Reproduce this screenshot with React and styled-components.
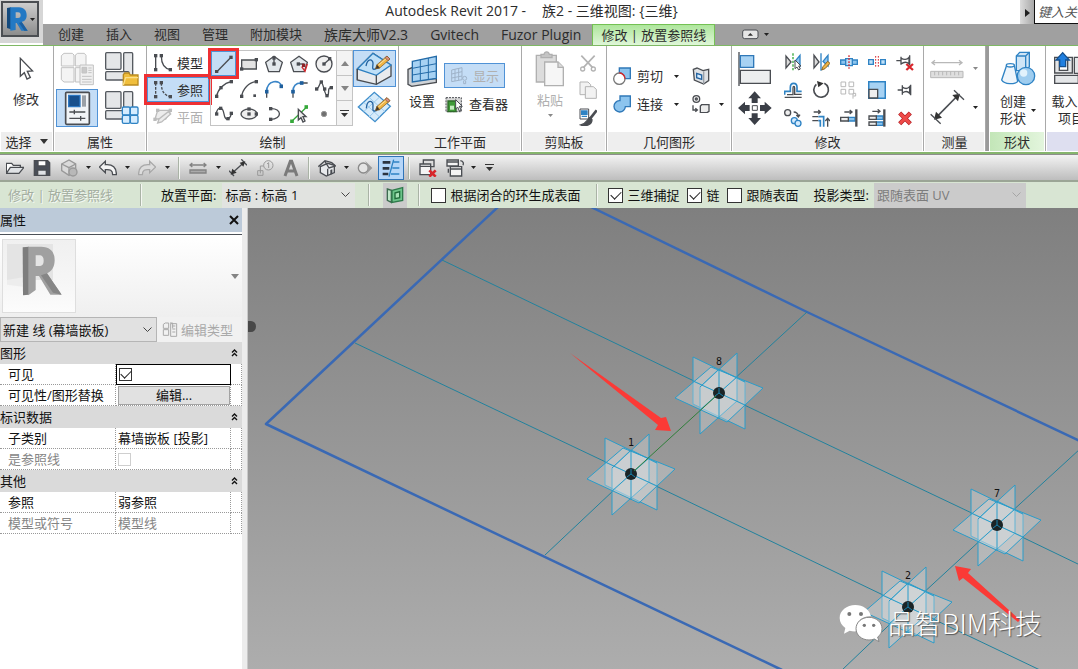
import { useState } from "react";
import styled, { createGlobalStyle } from "styled-components";

const GlobalStyle = createGlobalStyle`
  * {
    box-sizing: border-box;
  }
  body {
    margin: 0;
    background: #fff;
    color: #2c2c2c;
    font-family: "Open Sans", "Noto Sans CJK SC", sans-serif;
    font-size: 13px;
    line-height: 18px;
  }
  button, input, select {
    font: inherit;
    color: inherit;
    margin: 0;
    padding: 0;
  }
`;

const Window = styled.div`
  display: flex;
  flex-direction: column;
  min-height: 100vh;
  overflow: hidden;
`;

/* ---------- title and tabs ---------- */

const Top = styled.header`
  display: grid;
  grid-template-columns: 43px 1fr;
  grid-template-rows: 24px 21px;
`;

const AppCorner = styled.div`
  grid-row: 1 / 3;
  display: flex;
  padding: 1px 4px 6px 1px;
  border-bottom: 2px solid #fff;
  background: #d6d6d6;
`;

const AppButton = styled.button`
  flex: 1;
  display: flex;
  align-items: center;
  justify-content: center;
  gap: 2px;
  border: 2px solid #4b4e52;
  background: linear-gradient(#cdcdcd, #8d8d8d);
`;

const TitleBar = styled.div`
  display: flex;
  min-width: 0;
  background: #fff;
`;

const Title = styled.h1`
  display: flex;
  justify-content: center;
  gap: 16px;
  flex: 1;
  margin: 0;
  font-size: 14px;
  font-weight: 400;
  line-height: 22px;
  white-space: pre;
`;

const SearchToggle = styled.button`
  width: 15px;
  border: 0;
  border-right: 1px solid #111;
  background: linear-gradient(90deg, #dcdcdc, #a8a8a8);
`;

const Search = styled.input`
  width: 43px;
  border: 0;
  border-bottom: 1px solid #111;
  padding-left: 3px;
  font-style: italic;
  &::placeholder {
    color: #555;
    opacity: 1;
  }
`;

const Tabs = styled.nav`
  display: flex;
  min-width: 0;
  padding-left: 4px;
  background: #a0a0a0;
`;

const Tab = styled.button`
  border: ${(p) => (p.$active ? "1px solid #74c154" : "0")};
  border-bottom: 0;
  padding: 0 ${(p) => (p.$active ? "8px" : "11px")};
  background: ${(p) =>
    p.$active ? "linear-gradient(#aee69c, #dff6d8)" : "transparent"};
  font-size: ${(p) => (p.$latin ? "14px" : "13px")};
  line-height: 21px;
  white-space: nowrap;
`;

const TabExtra = styled.div`
  display: flex;
  align-items: center;
  gap: 5px;
  margin-left: 27px;
`;

/* ---------- ribbon ---------- */

const Ribbon = styled.div`
  display: flex;
  overflow: hidden;
  border-top: 1px solid #7fb864;
  border-bottom: 2px solid #86b56d;
  padding-bottom: 1px;
  background: #fff;
`;

const PanelBox = styled.section`
  flex: none;
  width: ${(p) => p.$w}px;
  border-right: 1px solid #a9a9a9;
  border-left: ${(p) => (p.$split ? "3px solid #9a9a9a" : "0")};
`;

const PanelBody = styled.div`
  display: flex;
  height: 86px;
  padding: 4px ${(p) => p.$pad ?? 0}px 0;
  gap: ${(p) => p.$gap ?? 0}px;
`;

const PanelTitle = styled.div`
  display: flex;
  align-items: center;
  justify-content: center;
  gap: 8px;
  height: 19px;
  margin: 0 1px;
  background: ${(p) => p.$bg || "#eeeeee"};
`;

const Column = styled.div`
  display: flex;
  flex-direction: column;
  align-items: ${(p) => p.$align || "stretch"};
  gap: ${(p) => p.$gap ?? 0}px;
  padding-top: ${(p) => p.$top ?? 0}px;
  padding-left: ${(p) => p.$left ?? 0}px;
`;

const Row = styled.div`
  display: flex;
  align-items: center;
  height: ${(p) => p.$h || 28}px;
  gap: ${(p) => p.$gap ?? 0}px;
`;

const Tool = styled.button`
  display: flex;
  flex: none;
  align-items: center;
  justify-content: center;
  gap: ${(p) => p.$gap ?? 6}px;
  width: ${(p) => (p.$w ? p.$w + "px" : "auto")};
  height: ${(p) => (p.$h ? p.$h + "px" : "auto")};
  border: 1px solid ${(p) => (p.$on ? "#4f92d6" : "transparent")};
  background: ${(p) => (p.$on ? "#c4ddf6" : "transparent")};
  color: ${(p) => (p.disabled ? "#b0b0b0" : "inherit")};
  outline: ${(p) => (p.$marked ? "3px solid #ee3033" : "none")};
  white-space: nowrap;
`;

const BigTool = styled(Tool)`
  flex-direction: column;
  justify-content: flex-start;
  line-height: 17px;
`;

const PropertyGrid = styled.div`
  display: grid;
  grid-template-columns: 42px 42px;
  grid-template-rows: 38px 38px;
  gap: 1px 3px;
`;

const Gallery = styled.div`
  display: grid;
  grid-template-columns: repeat(5, 25px);
  grid-template-rows: repeat(3, 25px);
  height: 76px;
  margin-left: 1px;
  border: 1px solid #c4c4c4;
  border-right: 0;
`;

const GalleryScroll = styled.div`
  display: flex;
  flex-direction: column;
  width: 17px;
  height: 76px;
  button {
    flex: 1;
    border: 1px solid #c4c4c4;
    margin-top: -1px;
    background: #f3f3f3;
    line-height: 0;
  }
  button:first-child {
    margin-top: 0;
  }
`;

const ModifyGrid = styled.div`
  display: grid;
  grid-template-columns: repeat(5, 28px);
  grid-template-rows: repeat(3, 28px);
  padding-left: 6px;
`;

/* ---------- quick access and options ---------- */

const QuickBar = styled.div`
  display: flex;
  align-items: center;
  height: 26px;
  padding-left: 1px;
  border-top: 1px solid #8e8e8e;
  background: linear-gradient(#f3f3f3, #bdbdbd);
`;

const QuickSlot = styled.button`
  display: flex;
  flex: none;
  align-items: center;
  justify-content: center;
  width: ${(p) => p.$w}px;
  height: 24px;
  border: ${(p) => (p.$on ? "1px solid #2f74b8" : "0")};
  background: ${(p) => (p.$on ? "#b5d6f8" : "none")};
`;

const Divider = styled.span`
  flex: none;
  width: 2px;
  height: ${(p) => p.$h || 22}px;
  margin: 0 ${(p) => p.$m ?? 0}px;
  border-left: 1px solid #aab3a6;
  border-right: 1px solid #f4f7f2;
`;

const OptionsBar = styled.div`
  display: flex;
  align-items: center;
  height: 28px;
  border-top: 2px solid #9ba596;
  padding-left: 8px;
  background: #d8e5d3;
  color: #111;
  white-space: nowrap;
`;

const Faded = styled.span`
  width: 132px;
  color: #a3ada0;
  text-shadow: 1px 1px 0 #f5f9f3;
`;

const OptionLabel = styled.label`
  margin-left: ${(p) => p.$left ?? 0}px;
  margin-right: ${(p) => p.$right ?? 0}px;
`;

const SelectWrap = styled.span`
  display: flex;
  align-items: center;
  width: ${(p) => p.$w}px;
  height: ${(p) => p.$h || 25}px;
  padding-right: 4px;
  border: 1px solid ${(p) => p.$line || "transparent"};
  background: ${(p) => p.$bg};
  color: ${(p) => (p.$dim ? "#7c7c7c" : "#111")};
  select {
    flex: 1;
    min-width: 0;
    border: 0;
    padding-left: 2px;
    background: transparent;
    appearance: none;
    opacity: 1;
  }
`;

const Check = styled.input.attrs({ type: "checkbox" })`
  display: grid;
  place-items: center;
  flex: none;
  appearance: none;
  width: ${(p) => p.$size || 15}px;
  height: ${(p) => p.$size || 15}px;
  border: 1px solid ${(p) => (p.disabled ? "#cfcfcf" : "#333")};
  background: #fff;
  &:checked::before {
    content: "";
    width: 9px;
    height: 5px;
    margin-bottom: 3px;
    border-left: 1px solid #222;
    border-bottom: 1px solid #222;
    transform: rotate(-45deg);
  }
`;

const IconSlot = styled.button`
  display: flex;
  align-items: center;
  justify-content: center;
  width: 24px;
  height: 25px;
  border: 0;
  background: #cbcbcb;
`;

/* ---------- properties palette ---------- */

const Main = styled.main`
  display: flex;
  flex: 1;
`;

const Palette = styled.aside`
  flex: none;
  width: 248px;
  padding-right: 5px;
  border-right: 1px solid #c9c9c9;
  background: linear-gradient(90deg, #fff 242px, #ececec 242px);
`;

const PaletteHead = styled.div`
  display: flex;
  align-items: center;
  justify-content: space-between;
  height: 24px;
  padding-right: 2px;
  background: #bccad9;
  color: #111;
`;

const CloseButton = styled.button`
  width: 12px;
  height: 18px;
  border: 0;
  background: none;
  line-height: 0;
`;

const TypePreview = styled.div`
  display: flex;
  align-items: center;
  justify-content: space-between;
  height: 83px;
  margin-top: 2px;
  border-top: 1px solid #4c5158;
  padding: 0 3px 0 2px;
  background: linear-gradient(#fff, #efefef);
`;

const Thumb = styled.div`
  width: 74px;
  height: 74px;
  border: 1px solid #dedede;
  background: linear-gradient(#f0f0f0, #f6f6f6 60%, #fcfcfc);
`;

const TypeRow = styled.div`
  display: flex;
  align-items: center;
  height: 25px;
  background: #f1f1f1;
`;

const EditType = styled.button`
  display: flex;
  align-items: center;
  gap: 3px;
  flex: 1;
  padding-left: 5px;
  border: 0;
  background: none;
  color: #a9a9a9;
  white-space: nowrap;
`;

const PropTable = styled.table`
  width: 242px;
  table-layout: fixed;
  border-collapse: separate;
  border-spacing: 0;
  line-height: 18px;
  color: #111;
  th, td {
    padding: 0;
    font-weight: 400;
    text-align: left;
    white-space: nowrap;
  }
`;

const GroupCell = styled.th`
  height: 22px;
  background: #dadada;
  div {
    display: flex;
    justify-content: space-between;
    align-items: center;
    padding-right: 4px;
  }
`;

const PropRow = styled.tr`
  color: ${(p) => (p.$dim ? "#858585" : "#111")};
  th, td {
    height: 21px;
    border-right: 1px dotted #999;
    border-bottom: 1px dotted #999;
  }
  th {
    padding-left: 8px;
  }
  td {
    padding-left: 2px;
  }
  td[data-active] {
    border: 1px solid #000;
    padding-left: 2px;
  }
`;

const EditButton = styled.button`
  display: block;
  width: 100%;
  height: 19px;
  border: 1px solid #a3a3a3;
  background: #e1e1e1;
  line-height: 16px;
`;

/* ---------- 3D view ---------- */

const View = styled.div`
  position: relative;
  display: flex;
  flex: 1;
  min-width: 0;
  background: linear-gradient(#7f7f7f, #adadad);
`;

const Scene = styled.svg`
  flex: 1;
  min-width: 0;
  font-family: "DejaVu Sans Mono", monospace;
  font-size: 10px;
`;

const Watermark = styled.div`
  position: absolute;
  right: 36px;
  bottom: 26px;
  display: flex;
  align-items: center;
  gap: 5px;
  color: #fff;
  font-family: "Noto Sans CJK SC", sans-serif;
  font-size: 27px;
  font-weight: 300;
  line-height: 40px;
  text-shadow: 1px 1px 1px #555;
`;

/* ---------- icons, drawn at three units to a pixel ---------- */

function Icon({ box, children }) {
  const [, , w, h] = box.split(" ").map(Number);
  return (
    <svg
      width={w / 3}
      height={h / 3}
      viewBox={box}
      fill="none"
      stroke="#4a4d52"
      strokeWidth="4"
      aria-hidden="true"
    >
      {children}
    </svg>
  );
}

const S = "-27 -27 54 54";

function Pts({ at, c = "#4a4d52", s = 10 }) {
  return at.map(([x, y]) => (
    <rect
      key={x + "," + y}
      x={x - s / 2}
      y={y - s / 2}
      width={s}
      height={s}
      fill={c}
      stroke="none"
    />
  ));
}

function Arrow({ up, gray }) {
  return (
    <svg width="8" height="5" viewBox="0 0 8 5" aria-hidden="true">
      <path
        d={up ? "M0 5 4 0 8 5Z" : "M0 0H8L4 5Z"}
        fill={gray ? "#858585" : "#333"}
      />
    </svg>
  );
}

function SmallArrow({ gray }) {
  return (
    <svg width="5" height="3" viewBox="0 0 5 3" aria-hidden="true">
      <path d="M0 0H5L2.5 3Z" fill={gray ? "#888" : "#222"} />
    </svg>
  );
}

function Chevron({ color = "#444" }) {
  return (
    <svg width="9" height="6" viewBox="0 0 9 6" fill="none" aria-hidden="true">
      <path d="M.5 .5 4.5 4.5 8.5 .5" stroke={color} />
    </svg>
  );
}

const MoreArrow = () => (
  <svg width="9" height="7" viewBox="0 0 9 7" aria-hidden="true">
    <path d="M0 0H9V1H0ZM1 3H8L4.5 7Z" fill="#333" />
  </svg>
);

const Pencil = ({ x, y }) => (
  <g transform={`translate(${x} ${y})`} stroke="#7a5520" strokeWidth="2">
    <path d="M0 34 4 22 34-4 43 5 12 32Z" fill="#f0b544" />
    <path d="M8 24 36 0" stroke="#fbe2a6" strokeWidth="3" />
    <path d="M28 1 34-4 43 5 37 10Z" fill="#d98b80" />
    <path d="M0 34 4 22 12 32Z" fill="#333" />
  </g>
);

const CursorIcon = () => (
  <Icon box="54 171 45 72">
    <path d="M58 175V229L70 218 78 237 88 232 79 214 95 213Z" fill="#fff" />
  </Icon>
);

const TypeIcon = () => (
  <Icon box="177 153 105 102">
    <g stroke="#c2c2c2" strokeWidth="3" fill="#f4f4f4">
      <path d="M181 164 189 157H214L219 162V195H181Z" />
      <path d="M223 162 230 157H250L255 163V195H223Z" />
      <path d="M181 200H219V243H189L181 236Z" />
      <path d="M223 200H240V243H223Z" />
      <path d="M237 192H277V251H237Z" fill="#f0f0f0" />
      <path d="M243 199H257V216H243Z" fill="#c9c9c9" />
      <path d="M262 201H272M262 208H272M262 215H272M243 226H272M243 235H272M243 243H272" />
    </g>
  </Icon>
);

const Shapes = () => (
  <g stroke="#555a60" fill="#e4e6e8">
    <rect x="314" y="155" width="46" height="50" rx="3" />
    <rect x="368" y="155" width="27" height="80" rx="3" />
    <rect x="314" y="212" width="70" height="25" rx="3" />
  </g>
);

const CategoryIcon = () => (
  <Icon box="309 150 108 108">
    <Shapes />
    <path d="M367 252V221L371 216H384L388 222H411V252Z" fill="#f0be3c" stroke="#b98a1f" />
    <path d="M367 252 374 230H411" stroke="#fbe08a" />
  </Icon>
);

const FamilyTypesIcon = () => (
  <Icon box="309 150 108 108">
    <Shapes />
    <g fill="#d5ecff" stroke="#2f83c4" strokeWidth="4">
      <rect x="364" y="201" width="23" height="24" rx="4" />
      <rect x="388" y="201" width="23" height="24" rx="4" />
      <rect x="364" y="226" width="23" height="24" rx="4" />
      <rect x="388" y="226" width="23" height="24" rx="4" />
    </g>
  </Icon>
);

const PropertiesIcon = () => (
  <Icon box="186 273 81 105">
    <rect x="191" y="277" width="71" height="96" rx="3" fill="#f1f4f7" strokeWidth="5" />
    <path d="M200 286H234V320H200Z" fill="#174f8c" stroke="#2e78c2" />
    <path d="M240 286H252V320H240Z" fill="#9aa0a7" stroke="none" />
    <path d="M202 336H250M202 355H250M217 329V343M236 348V362" />
  </Icon>
);

const ModelLine = ({ dashed }) => (
  <Icon box="456 153 60 60">
    <path d="M464 162V202M481 162C481 184 488 199 508 203" strokeDasharray={dashed ? "8 4" : null} />
    <Pts at={[[464, 161], [464, 203], [481, 161], [508, 203]]} />
  </Icon>
);

const PlaneIcon = () => (
  <Icon box="456 324 60 57">
    <g stroke="#bcbcbc" fill="#ececec">
      <path d="M470 334H510L494 360H462Z" />
      <path d="M470 372 474 360 502 338 509 345 482 369Z" />
    </g>
    <Pts at={[[470, 334], [508, 334], [462, 361]]} c="#bcbcbc" />
  </Icon>
);

const galleryIcons = [
  ["直线", <><path d="M-23 25 21-20" /><Pts at={[[-22, 23], [21, -20]]} /></>],
  ["矩形", <><path d="M-22-12H22V15H-22Z" fill="#e3e3e3" /><Pts at={[[22, -13], [-22, 15]]} /></>],
  ["内接多边形", <><path d="M0-23 25-5 16 23H-16L-25-5Z" fill="#e3e8ec" /><path d="M0-20V0" /><Pts at={[[0, 0], [0, -18]]} /></>],
  ["外接多边形", <><path d="M0-23 25-5 16 23H-16L-25-5Z" fill="#e3e8ec" /><path d="M-2 0H16" /><path d="M25 0 18 22 8 8" stroke="#d8262c" /><Pts at={[[-2, 0]]} /><Pts at={[[14, 4]]} c="#8a2226" /></>],
  ["圆形", <><circle r="24" fill="#f0f0f0" /><path d="M0 0 17-15" /><Pts at={[[0, 0], [17, -16]]} /></>],
  ["起点-终点-半径弧", <><path d="M-23 24C-18 0 0-18 22-22" /><Pts at={[[-22, 22], [-9, -4], [22, -22]]} /></>],
  ["圆心-端点弧", <><path d="M-22 24C-20 0 0-20 22-22" /><Pts at={[[-22, 22], [22, -22]]} /><Pts at={[[17, 20]]} s={8} /></>],
  ["相切-端点弧", <><path d="M-22 8C-22-28 20-30 22-8" stroke="#3b86c8" strokeWidth="5" /><path d="M-22 12V26" /><Pts at={[[-22, 8], [22, -8]]} c="#1f5f9c" s={11} /></>],
  ["圆角弧", <><path d="M-18 8C-18-10-8-18 6-18" stroke="#3b86c8" strokeWidth="5" /><path d="M-18 12V26M8-18H26" /><Pts at={[[-18, 8], [8, -18]]} c="#1f5f9c" s={11} /></>],
  ["样条曲线", <><path d="M-22 0C-14-2-14-20-8-20S2 22 10 20 8-6 22-4" /><Pts at={[[-22, 0], [-8, -21], [9, 20], [22, -4], [2, 0]]} /></>],
  ["样条", <><path d="M-24 2C-20-24-4-24 0 0S16 18 22 0" /><Pts at={[[-22, 0], [-10, -17], [12, 14], [22, -2]]} /></>],
  ["椭圆", <><ellipse rx="24" ry="15" fill="#eee" /><Pts at={[[0, 0], [0, -15], [22, 0]]} /></>],
  ["半椭圆", <><path d="M-10-16C24-18 26 16-10 16" /><Pts at={[[-10, -16], [-10, 16]]} /></>],
  ["拾取线", <><path d="M-24 24 24-22" stroke="#35a83a" /><Pts at={[[-21, 22], [22, -21]]} c="#35a83a" s={11} /><path d="M-2-14V18L6 11 12 24 18 21 12 8H21Z" fill="#eee" /></>],
  ["点图元", <circle r="8" fill="#707070" stroke="#999" strokeWidth="3" />],
];

const OnFaceIcon = () => (
  <Icon box="12 153 117 105">
    <path d="M19 207 66 160 120 195V228L76 253 19 240Z" fill="#e9ebee" />
    <path d="M19 207 66 160 120 195 76 226Z" fill="#bfe0f8" stroke="#2d7fc0" />
    <path d="M76 226V253M19 207V240" />
    <path d="M45 198C50 172 66 178 66 190S60 212 76 206" stroke="#2463a0" />
    <Pencil x={74} y={172} />
  </Icon>
);

const OnPlaneIcon = () => (
  <Icon box="12 273 117 102">
    <path d="M22 324 70 280 118 322 72 368Z" fill="#d6ebfa" stroke="#3f8ecb" />
    <path d="M38 310 86 354M54 295 102 338M38 338 86 294M54 354 102 308" stroke="#9ccbee" strokeWidth="3" />
    <path d="M46 328C48 300 66 304 66 318S62 340 78 334" stroke="#2463a0" />
    <Pencil x={74} y={300} />
  </Icon>
);

const SetPlaneIcon = () => (
  <Icon box="165 159 99 102">
    <path d="M171 205 185 199V240L256 232V244L182 256 171 250Z" fill="#cfd3d7" />
    <path d="M184 181 256 166V232L184 243Z" fill="#a7d2f3" stroke="#246ba8" />
    <path d="M208 176V240M232 171V236M184 202 256 188M184 222 256 210" stroke="#246ba8" strokeWidth="3" />
  </Icon>
);

const ShowIcon = () => (
  <Icon box="294 201 54 57">
    <g stroke="#9fb3c9" strokeWidth="3">
      <path d="M299 213 330 206V242L299 248ZM309 211V246M320 208V244M299 225 330 218M299 237 330 231" />
      <circle cx="338" cy="238" r="6" />
      <path d="M335 246V254H341V246" />
    </g>
  </Icon>
);

const ViewerIcon = () => (
  <Icon box="294 285 54 51">
    <path d="M297 290H343V332H297Z" fill="#d7d7d7" strokeWidth="3" strokeDasharray="6 3" />
    <path d="M303 300H327V332H303Z" fill="#3f9a38" stroke="#2f6a2b" />
    <path d="M309 314H321V326H309Z" fill="#c4ebc0" stroke="none" />
    <path d="M326 296V324L332 318 337 330 342 327 337 316H346Z" fill="#fff" strokeWidth="3" />
  </Icon>
);

const PasteIcon = () => (
  <Icon box="555 150 90 108">
    <g stroke="#b0b0b0" fill="#dcdcdc">
      <path d="M559 163H619V243H559Z" />
      <path d="M573 170V160H582C584 150 596 150 598 160H606V170Z" fill="#c4c4c4" />
      <path d="M584 183H624L640 199V254H584Z" fill="#f6f6f6" />
      <path d="M624 183V199H640" />
    </g>
  </Icon>
);

const CutIcon = () => (
  <Icon box={S}>
    <g stroke="#b3b3b3">
      <path d="M-20-22 14 14M20-22-14 14" strokeWidth="5" />
      <circle cx="-16" cy="18" r="6" />
      <circle cx="16" cy="18" r="6" />
    </g>
  </Icon>
);

const CopyIcon = () => (
  <Icon box={S}>
    <g stroke="#b3b3b3" strokeWidth="3" fill="#f2f2f2">
      <path d="M-24-24H0L8-16V14H-24Z" />
      <path d="M-8-10H16L25-2V25H-8Z" />
    </g>
  </Icon>
);

const MatchIcon = () => (
  <Icon box={S}>
    <path d="M-24-24H2V6H-24Z" fill="#fff" strokeWidth="3" />
    <path d="M-19-18H-3V-8H-19ZM-19-2H-3" fill="#2f83c4" stroke="#2f83c4" />
    <path d="M26-20 4 8" strokeWidth="8" />
    <path d="M6 2C-2 6-4 20-22 24-6 30 12 22 12 8Z" fill="#4a4d52" />
  </Icon>
);

const CutGeomIcon = () => (
  <Icon box={S}>
    <path d="M-8-24H25V8H6A18 18 0 0 0-8-10Z" fill="#8cc4ee" stroke="#2f78b8" />
    <circle cx="-8" cy="8" r="17" fill="#fff" stroke="#777" />
    <path d="M-8-9A17 17 0 0 1 9 8" stroke="#d8262c" />
  </Icon>
);

const JoinIcon = () => (
  <Icon box={S}>
    <path d="M-6-24H25V8H10A17 17 0 1 1-8-10H-6Z" fill="#8cc4ee" stroke="#2f78b8" />
  </Icon>
);

const SplitFaceIcon = () => (
  <Icon box={S}>
    <path d="M-23-20-12-24 6-16 23-20V14L8 24-20 12Z" fill="#dfe2e5" />
    <path d="M8-14V24" stroke="#9aa0a7" />
    <path d="M-13-8 2-3V10L-13 5Z" fill="#d5ecff" stroke="#2463a0" />
  </Icon>
);

const CopyGeomIcon = () => (
  <Icon box="-30 -27 60 54">
    <circle cx="-14" cy="-15" r="10" fill="#f2f2f2" />
    <circle cx="-14" cy="-15" r="3" />
    <path d="M2 2H24V22L18 26H-2V6Z" fill="#ececec" />
    <path d="M-24 4V18H-12M-17 13-11 18-17 23" />
  </Icon>
);

const AlignIcon = () => (
  <Icon box="51 153 105 108">
    <path d="M57 156V258" />
    <path d="M61 167H101V202H61Z" fill="#a7d2f3" stroke="#2f78b8" />
    <path d="M61 211H151V250H61Z" fill="#eceeef" />
  </Icon>
);

const MoveIcon = () => (
  <Icon box="51 273 105 102">
    <path
      d="M104 274 123 295H113V309H95V295H85ZM104 375 123 354H113V340H95V354H85ZM54 324 75 305V315H89V333H75V343ZM155 324 134 305V315H120V333H134V343Z"
      fill="#3a3e46"
      stroke="none"
    />
    <path d="M97 317H112V331H97Z" fill="#fff" strokeWidth="3" />
  </Icon>
);

const Red = "#d8262c";
const Blue = "#2f83c4";

const modifyIcons = [
  ["镜像-拾取轴", <><path d="M-21-18V18L-6 0Z" fill="#ddd" /><path d="M0-26V26" stroke="#35a83a" strokeDasharray="7 4" /><path d="M21-20V12L6-2Z" fill="#8cc4ee" stroke={Blue} /><path d="M6-6V20L12 15 17 24 22 21 17 12H24Z" fill="#fff" strokeWidth="3" /></>],
  ["镜像-绘制轴", <><path d="M-21-20V18L-6 0Z" fill="#ddd" /><path d="M0-26V26" stroke={Blue} /><path d="M21-20V12L6-2Z" fill="#8cc4ee" stroke={Blue} /><path d="M2 24 6 14 20-2 27 4 12 20Z" fill="#f0b544" stroke="#8a6424" strokeWidth="3" /></>],
  ["拆分图元", <><path d="M-25-6H25V7H-25Z" fill="#8cc4ee" stroke={Blue} /><path d="M-10-10H10V11H-10Z" fill="#bfe0f8" stroke={Blue} /><path d="M0-20V20" stroke={Red} strokeDasharray="5 4" /></>],
  ["用间隙拆分", <><path d="M-25-7H-11V7H-25ZM11-7H25V7H11Z" fill="#bfe0f8" stroke={Blue} /><path d="M-4-18V18M4-18V18" stroke={Red} strokeWidth="3" strokeDasharray="5 4" /></>],
  ["解锁", <><path d="M-26-4H-12M-12-16V8M-12-12C-4-6 6-6 12-14V6C6 0-4 0-12 6M14-20V10" /><path d="M4 6 24 24M24 6 4 24" stroke={Red} strokeWidth="7" /></>],
  ["偏移", <><path d="M-25 14V4H-8V-8C-8-24 12-24 12-8V4H26" stroke={Blue} strokeWidth="5" /><path d="M-25 22H26M-18 14H0V-6C0-12 5-12 5-6V13H26" /></>],
  ["旋转", <><path d="M-14-17A22 22 0 1 0 10-20" strokeWidth="5" /><path d="M-12-27 8-20-8-8Z" fill="#333" stroke="none" /></>],
  ["阵列", <g stroke="#b9b9b9" strokeWidth="3"><path d="M-24-24H-10V-10H-24ZM0-24H14V-10H0ZM-24-2H-10V12H-24ZM0-2H14V12H0Z" /><path d="M12 26V10H20V18H13" /></g>],
  ["缩放", <><path d="M-25-25H25V25H-25Z" fill="#a7d2f3" stroke={Blue} strokeWidth="5" /><path d="M-24-2H2V24H-24Z" fill="#eee" /></>],
  ["锁定", <path d="M-22 0H-8M-8-14V14M-8-9C0-3 8-3 14-10V10C8 3 0 3-8 9M17-16V16" />],
  ["复制", <><circle cx="-16" cy="-16" r="9" fill="#eee" /><path d="M2-18C10-18 16-12 16-6M10-9 16-3 21-10" /><circle cx="4" cy="8" r="9" fill="#d5ecff" stroke={Blue} /><circle cx="15" cy="16" r="9" fill="#d5ecff" stroke={Blue} /></>],
  ["修剪为角", <><path d="M-22-18H-2M-8-24-2-18-8-12" /><path d="M-26-4H-8M-26 8H-8" /><path d="M-8-4H8V26M-8 8H-2V26" stroke={Blue} strokeWidth="5" /><path d="M20 26V2M13 9 20 1 27 9" /></>],
  ["修剪单个", <><path d="M-14-18H8M2-24 9-18 2-12" /><path d="M-2-2H18V9H-2Z" fill="#8cc4ee" stroke={Blue} /><path d="M-25-2H-2V9H-25Z" fill="#eee" /><path d="M22-26V26" strokeWidth="7" /></>],
  ["修剪多个", <><path d="M-14-20H8M2-26 9-20 2-14" /><path d="M-2-6H18V4H-2ZM-2 12H18V22H-2Z" fill="#8cc4ee" stroke={Blue} /><path d="M-24-6H-2V4H-24ZM-24 12H-2V22H-24Z" fill="#eee" /><path d="M22-26V26" strokeWidth="7" /></>],
  ["删除", <><path d="M-16-15 16 17M16-15-16 17" stroke="#b01d22" strokeWidth="13" /><path d="M-15-14 15 16M15-14-15 16" stroke="#ee4a48" strokeWidth="9" /></>],
];

const RulerIcon = () => (
  <Icon box="630 171 102 66">
    <g stroke="#b8b8b8">
      <path d="M636 188H726M645 181 636 188 645 195M717 181 726 188 717 195" />
      <path d="M632 214H729V233H632Z" fill="#dedede" strokeWidth="3" />
      <path d="M644 214V226M656 214V226M668 214V226M680 214V226M692 214V226M704 214V226M716 214V226" strokeWidth="3" />
    </g>
  </Icon>
);

const DimensionIcon = () => (
  <Icon box="630 270 105 108">
    <path d="M648 356 712 291" strokeWidth="5" />
    <path d="M642 362 648 338 666 356ZM720 284 697 288 714 307Z" fill="#333" stroke="none" />
    <path d="M632 346 662 374M702 274 732 302" />
  </Icon>
);

const FormIcon = () => (
  <Icon box="837 153 108 108">
    <path d="M886 168 896 157H925V200L914 212H886Z" fill="#cfe5f6" stroke={Blue} />
    <path d="M886 168H914V212M914 168 925 157" stroke={Blue} />
    <path d="M857 196 842 240C850 254 882 254 890 244L880 196Z" fill="#eef5fb" stroke={Blue} />
    <ellipse cx="868" cy="196" rx="12" ry="5" fill="#fff" stroke={Blue} />
    <circle cx="915" cy="228" r="26" fill="#9fcdef" stroke={Blue} />
    <circle cx="908" cy="219" r="11" fill="#e2f2fc" stroke="none" />
  </Icon>
);

const LoadIcon = () => (
  <Icon box="1008 153 111 108">
    <path d="M1013 172H1027V211H1052V172H1066V219H1013Z" fill="#e4e6e8" />
    <path d="M1013 226H1084V250H1013ZM1072 172H1098V250H1084V220H1072Z" fill="#e4e6e8" />
    <path d="M1037 158 1057 180H1046V200H1028V180H1017Z" fill="#1f7fe0" stroke="#14508f" />
  </Icon>
);

const quickIcons = {
  open: <Icon box={S}><path d="M-26 16V-14H-10L-5-8H16V0" fill="#fff" /><path d="M-26 16-14-2H27L12 16Z" fill="#dfe2e5" /></Icon>,
  save: <Icon box={S}><path d="M-23-22H17L23-16V22H-23Z" fill="#4a4f58" /><path d="M-12-22H12V-6H-12Z" fill="#fff" /><path d="M-13 6H13V22H-13Z" fill="#dfe2e5" /></Icon>,
  sync: <Icon box={S}><g stroke="#999"><path d="M-22-12 0-24 20-12V8L0 22-22 8Z" fill="#dadada" /><path d="M-22-12 0-1 20-12M0-1V22" /><circle cx="12" cy="12" r="12" fill="#b8b8b8" /></g></Icon>,
  undo: <Icon box={S}><path d="M-26-3-8-20V-10C14-12 26-2 25 20H14C14 6 6 4-8 5V14Z" fill="#f4f4f4" /></Icon>,
  redo: <Icon box={S}><path d="M26-3 8-20V-10C-14-12-26-2-25 20H-14C-14 6-6 4 8 5V14Z" fill="#dcdcdc" stroke="#a8a8a8" /></Icon>,
  measure: <Icon box={S}><path d="M-24-9H24M-17-15-24-9-17-3M17-15 24-9 17-3" stroke="#838383" /><path d="M-24 6H24V15H-24Z" stroke="#838383" fill="#aaa" /></Icon>,
  dim: <Icon box={S}><path d="M-17 15 16-15M-27 8-12 24M10-26 27-8" /><path d="M-22 20-17 2-4 14ZM22-20 5-16 16-4Z" fill="#333" stroke="none" /></Icon>,
  tag: <Icon box={S}><g stroke="#999" strokeWidth="3"><circle cx="10" cy="-8" r="14" /><path d="M6-12 11-16V0M-4-6H-14V16M-22 8H-6V22H-22Z" /></g></Icon>,
  text: <Icon box={S}><path d="M-18 24-2-20H2L18 24M-11 9H11" stroke="#7a7a7a" strokeWidth="9" /></Icon>,
  home: <Icon box={S}><path d="M-20-4V14L-2 24 22 14V-8L2-14Z" fill="#e8eaec" /><path d="M-26-4-6-22 14-16 26-6 6 0-6-20M2 2V22" /><path d="M10 6 16 4V18L10 20Z" fill="#4a4d52" stroke="none" /></Icon>,
  section: <Icon box={S}><circle cx="-5" r="15" stroke="#8a8a8a" fill="#e4e4e4" /><path d="M0-22 22 0 0 22 8 8V-8Z" fill="#999" stroke="none" /></Icon>,
  thin: <Icon box={S}><path d="M-25-17H-2M-25 1H-5M-25 18H-8" strokeWidth="8" stroke="#2c3440" /><path d="M8-18H25M4 0H25M0 18H25M8-25-6 26" stroke="#2f83c4" /></Icon>,
  close: <Icon box={S}><path d="M-14-24H18V-4H-14Z" fill="#ddd" /><path d="M-24-12H8V20H-24ZM-24-5H8" fill="#f4f4f4" /><path d="M4 7 23 26M23 7 4 26" stroke={Red} strokeWidth="8" /></Icon>,
  switch: <Icon box={S}><path d="M-24-24H10V-6H-24ZM-24-18H10" fill="#f4f4f4" /><path d="M-14-4H20V24H-14ZM-14 3H20" fill="#f4f4f4" /><path d="M16-22C26-20 26-14 24-8M-20 2V14" /></Icon>,
};

const quickItems = [
  ["open", 27], ["save", 27], ["sync", 27, 12], ["undo", 27, 12], ["redo", 27, 14],
  ["|"], ["measure", 28, 12], ["dim", 28], ["tag", 26], ["text", 26],
  ["|"], ["home", 26, 12], ["section", 26], ["thin", 26], ["|"],
  ["close", 27], ["switch", 28, 8],
];

const PlaneButtonIcon = () => (
  <Icon box={S}>
    <path d="M-23-18-11-14V22L-23 16Z" fill="#bfe5c8" stroke="#3d6b50" />
    <path d="M-9-14 23-22V16L-9 22Z" fill="#6cc48a" stroke="#2f7a4c" />
    <path d="M0-6 14-10V8L0 11Z" stroke="#1f6b3a" fill="#a5e0b5" />
  </Icon>
);

const AppLogo = () => (
  <Icon box="0 0 69 78">
    <g stroke="none">
      <path d="M6 6 18 4V70L6 66Z" fill="#154a7d" />
      <path
        d="M16 4H42C58 4 65 15 65 28S58 46 50 48L68 74H49L35 51H32V72L16 74ZM32 19V36H39C45 36 47 33 47 28S45 19 39 19Z"
        fill="#2379c4"
        fillRule="evenodd"
      />
      <path d="M50 48 68 74H58L42 51Z" fill="#1c5f9f" />
    </g>
  </Icon>
);

const TypeLogo = () => (
  <Icon box="0 0 216 216">
    <g stroke="none">
      <path d="M12 12H150V120H12Z" fill="#e4e4e4" />
      <path d="M12 120 60 112V140L12 134Z" fill="#ededed" />
      <path d="M59 22 78 20V164L60 166Z" fill="#7d7d7d" />
      <path
        d="M76 20H114C144 20 155 38 155 60 155 82 145 94 132 100L176 164H142L108 108H98V150L76 166ZM98 46V78H108C118 78 122 72 122 62S118 46 108 46Z"
        fill="#a0a0a0"
        fillRule="evenodd"
      />
      <path d="M132 100 176 164 150 158 114 106Z" fill="#868686" />
    </g>
  </Icon>
);

const WeChat = () => (
  <Icon box="834 816 132 114">
    <g stroke="none">
      <path
        d="M883 819C857 819 836 836 836 858 836 871 843 881 853 888L849 905 866 896C873 898 880 899 886 898 880 872 902 851 930 853 926 833 906 819 883 819Z"
        fill="#fff"
      />
      <path
        d="M924 856C902 856 885 871 885 890S902 924 924 924C930 924 935 923 940 921L954 929 950 915C959 909 963 900 963 890 963 871 946 856 924 856Z"
        fill="#fff"
        stroke="#888"
        strokeWidth="3"
      />
      <circle cx="865" cy="846" r="6" fill="#777" />
      <circle cx="900" cy="846" r="6" fill="#777" />
      <circle cx="910" cy="880" r="5" fill="#777" />
      <circle cx="938" cy="880" r="5" fill="#777" />
    </g>
  </Icon>
);

/* ---------- pieces ---------- */

function Panel({ w, title, children, pad, gap, bg, split }) {
  return (
    <PanelBox $w={w} $split={split}>
      <PanelBody $pad={pad} $gap={gap}>
        {children}
      </PanelBody>
      <PanelTitle $bg={bg}>{title}</PanelTitle>
    </PanelBox>
  );
}

function RibbonPanels() {
  const [tool, setTool] = useState("直线");
  return (
    <Ribbon>
      <Panel w={54} title={<>选择 <Arrow /></>}>
        <BigTool $w={52} $gap={10}>
          <Column $top={6}><CursorIcon /></Column>
          修改
        </BigTool>
      </Panel>
      <Panel w={93} title="属性" pad={2}>
        <PropertyGrid>
          <Tool aria-label="类型属性" disabled><TypeIcon /></Tool>
          <Tool aria-label="族类别"><CategoryIcon /></Tool>
          <Tool aria-label="属性" $on><PropertiesIcon /></Tool>
          <Tool aria-label="族类型"><FamilyTypesIcon /></Tool>
        </PropertyGrid>
      </Panel>
      <Panel w={252} title="绘制">
        <Column $gap={2}>
          <Tool $w={62} $h={25} $gap={4}><ModelLine />模型</Tool>
          <Tool $w={62} $h={25} $gap={4} $on $marked><ModelLine dashed />参照</Tool>
          <Tool $w={62} $h={25} $gap={4} disabled><PlaneIcon />平面</Tool>
        </Column>
        <Gallery>
          {galleryIcons.map(([name, art]) => (
            <Tool
              key={name}
              aria-label={name}
              $on={tool === name}
              $marked={name === "直线"}
              onClick={() => setTool(name)}
            >
              <Icon box={S}>{art}</Icon>
            </Tool>
          ))}
        </Gallery>
        <GalleryScroll>
          <button aria-label="上"><Arrow up gray /></button>
          <button aria-label="下"><Arrow gray /></button>
          <button aria-label="更多"><MoreArrow /></button>
        </GalleryScroll>
        <Column>
          <Tool $w={43} $h={37} aria-label="在面上绘制" $on><OnFaceIcon /></Tool>
          <Tool $w={43} $h={40} aria-label="在工作平面上绘制"><OnPlaneIcon /></Tool>
        </Column>
      </Panel>
      <Panel w={123} title="工作平面" pad={5}>
        <BigTool $w={36} $gap={5}><Column $top={3}><SetPlaneIcon /></Column>设置</BigTool>
        <Column $top={13} $left={4} $gap={4} $align="flex-start">
          <Tool $w={61} $h={25} $gap={5} $on disabled><ShowIcon />显示</Tool>
          <Tool $h={24} $gap={6}><ViewerIcon />查看器</Tool>
        </Column>
      </Panel>
      <Panel w={85} title="剪贴板" pad={7}>
        <BigTool $w={42} $gap={5} disabled><PasteIcon />粘贴<SmallArrow gray /></BigTool>
        <Column>
          <Tool $w={34} $h={26} aria-label="剪切" disabled><CutIcon /></Tool>
          <Tool $w={34} $h={28} aria-label="复制" disabled><CopyIcon /></Tool>
          <Tool $w={34} $h={26} aria-label="匹配类型"><MatchIcon /></Tool>
        </Column>
      </Panel>
      <Panel w={125} title="几何图形" pad={5}>
        <Column $top={12}>
          <Row>
            <Tool $gap={6}><CutGeomIcon />剪切</Tool>
            <Tool $w={24}><SmallArrow /></Tool>
            <Tool $w={26} aria-label="拆分面"><SplitFaceIcon /></Tool>
          </Row>
          <Row>
            <Tool $gap={6}><JoinIcon />连接</Tool>
            <Tool $w={24}><SmallArrow /></Tool>
            <Tool $w={26} aria-label="填色"><CopyGeomIcon /></Tool>
            <Tool $w={14}><SmallArrow /></Tool>
          </Row>
        </Column>
      </Panel>
      <Panel w={192} title="修改" pad={3}>
        <Column>
          <Tool $w={38} $h={38} aria-label="对齐"><AlignIcon /></Tool>
          <Tool $w={38} $h={40} aria-label="移动"><MoveIcon /></Tool>
        </Column>
        <ModifyGrid>
          {modifyIcons.map(([name, art]) => (
            <Tool key={name} aria-label={name} $h={24}><Icon box={S}>{art}</Icon></Tool>
          ))}
        </ModifyGrid>
      </Panel>
      <Panel w={62} title="测量" pad={6}>
        <Column>
          <Row $h={36} $gap={9}><RulerIcon /><SmallArrow gray /></Row>
          <Row $h={42} $gap={8}><DimensionIcon /><SmallArrow /></Row>
        </Column>
      </Panel>
      <Panel w={60} title="形状" bg="linear-gradient(90deg, #c3e6b8, #e3f5dd)" pad={3} split>
        <BigTool $w={52} $gap={6}>
          <FormIcon />
          <Row $gap={5} $h={34}><span>创建<br />形状</span><SmallArrow /></Row>
        </BigTool>
      </Panel>
      <Panel w={50} title="" bg="#dedff0">
        <BigTool $w={50} $gap={6}>
          <LoadIcon />
          <span>载入到<br />项目</span>
        </BigTool>
      </Panel>
    </Ribbon>
  );
}

function Header() {
  const tabs = ["创建", "插入", "视图", "管理", "附加模块"];
  const addins = ["族库大师V2.3", "Gvitech", "Fuzor Plugin"];
  return (
    <Top>
      <AppCorner>
        <AppButton aria-label="应用程序菜单"><AppLogo /><SmallArrow /></AppButton>
      </AppCorner>
      <TitleBar>
        <Title><span>Autodesk Revit 2017 -</span><span>族2 - 三维视图: {"{三维}"}</span></Title>
        <SearchToggle aria-label="搜索">
          <svg width="5" height="8" viewBox="0 0 5 8"><path d="M0 0 5 4 0 8Z" fill="#222" /></svg>
        </SearchToggle>
        <Search aria-label="搜索框" placeholder="键入关键字或短语" />
      </TitleBar>
      <Tabs>
        {tabs.map((t) => <Tab key={t}>{t}</Tab>)}
        {addins.map((t) => <Tab key={t} $latin>{t}</Tab>)}
        <Tab $active>修改 | 放置参照线</Tab>
        <TabExtra>
          <Icon box="0 0 51 33">
            <rect x="2" y="3" width="46" height="26" rx="6" fill="#e6e6e6" strokeWidth="3" />
            <path d="M17 20 25 12 33 20Z" fill="#333" stroke="none" />
          </Icon>
          <SmallArrow />
        </TabExtra>
      </Tabs>
    </Top>
  );
}

function QuickAccess() {
  return (
    <QuickBar>
      {quickItems.map(([name, w, drop], i) =>
        name === "|" ? (
          <Divider key={i} $m={4} />
        ) : (
          <Row key={i} $h={24}>
            <QuickSlot $w={w} $on={name === "thin"} aria-label={name}>{quickIcons[name]}</QuickSlot>
            {drop && <QuickSlot $w={drop} aria-label={name + " menu"}><SmallArrow /></QuickSlot>}
          </Row>
        )
      )}
      <QuickSlot $w={24} aria-label="customize"><MoreArrow /></QuickSlot>
    </QuickBar>
  );
}

function Options() {
  return (
    <OptionsBar>
      <Faded>修改 | 放置参照线</Faded>
      <Divider />
      <OptionLabel htmlFor="plane" $left={19} $right={6}>放置平面:</OptionLabel>
      <SelectWrap $w={133} $bg="#e1e3e0">
        <select id="plane"><option>标高 : 标高 1</option></select>
        <Chevron />
      </SelectWrap>
      <Divider $m={13} />
      <IconSlot aria-label="在放置后显示"><PlaneButtonIcon /></IconSlot>
      <Divider $m={11} />
      <Check id="loop" />
      <OptionLabel htmlFor="loop" $left={4} $right={6}>根据闭合的环生成表面</OptionLabel>
      <Divider $m={10} />
      <Check id="snap" defaultChecked />
      <OptionLabel htmlFor="snap" $left={4} $right={8}>三维捕捉</OptionLabel>
      <Check id="chain" defaultChecked />
      <OptionLabel htmlFor="chain" $left={4} $right={8}>链</OptionLabel>
      <Check id="follow" />
      <OptionLabel htmlFor="follow" $left={4} $right={15}>跟随表面</OptionLabel>
      <OptionLabel htmlFor="projection" $right={5}>投影类型:</OptionLabel>
      <SelectWrap $w={152} $bg="#cbcbcb" $dim>
        <select id="projection"><option>跟随表面 UV</option></select>
        <Chevron color="#a5a5a5" />
      </SelectWrap>
    </OptionsBar>
  );
}

function Group({ name }) {
  return (
    <tr>
      <GroupCell colSpan="3">
        <div>
          {name}
          <svg width="7" height="8" viewBox="0 0 7 8" fill="none" stroke="#111" aria-hidden="true">
            <path d="M1 3.5 3.5 1 6 3.5M1 7 3.5 4.5 6 7" strokeWidth="1.4" />
          </svg>
        </div>
      </GroupCell>
    </tr>
  );
}

function Properties() {
  return (
    <Palette>
      <PaletteHead>
        属性
        <CloseButton aria-label="关闭">
          <svg width="10" height="10" viewBox="0 0 10 10"><path d="M1 1 9 9M9 1 1 9" stroke="#111" strokeWidth="2" /></svg>
        </CloseButton>
      </PaletteHead>
      <TypePreview>
        <Thumb><TypeLogo /></Thumb>
        <Arrow gray />
      </TypePreview>
      <TypeRow>
        <SelectWrap $w={157} $bg="#e1e1e1" $line="#b5b5b5">
          <select aria-label="类型"><option>新建 线 (幕墙嵌板)</option></select>
          <Chevron />
        </SelectWrap>
        <EditType>
          <Icon box="486 345 48 45">
            <g stroke="#a9a9a9" strokeWidth="3">
              <path d="M490 352 496 348H506V364H490ZM490 368H506V385H490ZM510 348H518V364" />
              <path d="M512 350H530V388H512ZM517 357H526M517 366H526M517 375H526" />
            </g>
          </Icon>
          编辑类型
        </EditType>
      </TypeRow>
      <PropTable>
        <colgroup><col width="116" /><col width="115" /><col width="11" /></colgroup>
        <tbody>
          <Group name="图形" />
          <PropRow>
            <th scope="row"><label htmlFor="visible">可见</label></th>
            <td data-active><Check id="visible" $size={13} defaultChecked /></td>
            <td />
          </PropRow>
          <PropRow>
            <th scope="row">可见性/图形替换</th>
            <td><EditButton>编辑...</EditButton></td>
            <td />
          </PropRow>
          <Group name="标识数据" />
          <PropRow><th scope="row">子类别</th><td>幕墙嵌板 [投影]</td><td /></PropRow>
          <PropRow $dim>
            <th scope="row"><label htmlFor="isref">是参照线</label></th>
            <td><Check id="isref" $size={13} disabled /></td>
            <td />
          </PropRow>
          <Group name="其他" />
          <PropRow><th scope="row">参照</th><td>弱参照</td><td /></PropRow>
          <PropRow $dim><th scope="row">模型或符号</th><td>模型线</td><td /></PropRow>
        </tbody>
      </PropTable>
    </Palette>
  );
}

const nodes = [
  { n: 8, x: 719, y: 393 },
  { n: 1, x: 631, y: 474 },
  { n: 7, x: 997, y: 525 },
  { n: 2, x: 908, y: 607 },
];

function Node({ n, x, y }) {
  return (
    <g transform={`translate(${x} ${y})`} stroke="#2a9cc9">
      <g fill="#e6ecf0" fillOpacity=".3">
        <path d="M-26-36 26-11V36L-26 11Z" />
        <path d="M18-40-19-6V41L18 8Z" />
        <path d="M-44 5-8-26 44-5 8 29Z" />
      </g>
      <path d="M-19-6 0-24 26-11M0-24V26M-26-12 26 12M-19 17 18-16" fill="none" />
      <circle r="6" fill="#1b2426" stroke="none" />
      <path d="M0 0V-5M0 0-4 3M0 0 4 3" stroke="#1781ad" />
      <text y="-28" textAnchor="middle" fill="#111" stroke="none">{n}</text>
    </g>
  );
}

function Viewport() {
  return (
    <View>
      <Scene viewBox="248 208 830 461" preserveAspectRatio="xMinYMin slice" fill="none">
        <g stroke="#3a69b4" strokeWidth="2.5">
          <path d="M498 207 266 424 782 670" strokeLinejoin="round" />
          <path d="M591 207 807 312 1080 441" />
        </g>
        <g stroke="#22829d">
          <path d="M442 260 719 393 997 525 1080 565" />
          <path d="M355 343 631 474 908 607 1040 670" />
          <path d="M807 312 719 393M631 474 545 555" />
          <path d="M1080 449 997 525 908 607 842 670" />
        </g>
        {nodes.map((p) => <Node key={p.n} {...p} />)}
        <path d="M716 396 634 471" stroke="#2f7f3a" />
        <g fill="#fb3a36">
          <path d="M570 353 661 418 666 417 671 431 655 430 658 425Z" />
          <path d="M955 566 971 569 968 573 1020 620 1018 622 963 578 959 581Z" />
        </g>
        <path d="M248 321H251A5 5.5 0 0 1 251 332H248Z" fill="#484848" />
      </Scene>
      <Watermark><WeChat />品智BIM科技</Watermark>
    </View>
  );
}

export default function App() {
  return (
    <Window>
      <GlobalStyle />
      <Header />
      <RibbonPanels />
      <QuickAccess />
      <Options />
      <Main>
        <Properties />
        <Viewport />
      </Main>
    </Window>
  );
}
